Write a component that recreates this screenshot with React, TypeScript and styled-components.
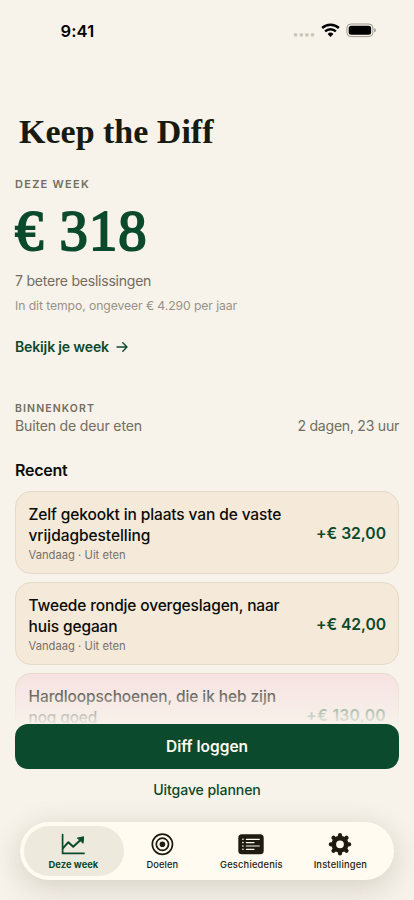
import React from 'react';
import styled, { createGlobalStyle, css } from 'styled-components';

const green = '#0b4a2c';
const paper = '#f7f2ea';

const GlobalStyle = createGlobalStyle`
  * { box-sizing: border-box; }
  body { margin: 0; background: ${paper}; }
`;

const Page = styled.div`
  display: flex;
  flex-direction: column;
  width: 414px;
  height: 900px;
  overflow: hidden;
  background: ${paper};
  color: #0b0c08;
  font-family: Inter, sans-serif;
  white-space: nowrap;
`;

const Viewport = styled.main`
  position: relative;
  flex: 1;
  min-height: 0;
  overflow: hidden;
`;

const Fade = styled.div`
  position: absolute;
  inset: auto 0 0 0;
  height: 52px;
  background: linear-gradient(rgba(247, 242, 234, 0), rgba(247, 242, 234, 0.95));
`;

const StatusBar = styled.header`
  display: flex;
  align-items: center;
  justify-content: space-between;
  height: 61px;
  padding: 0 37px 0 60.5px;
`;

const Clock = styled.span`
  font-size: 16.5px;
  font-weight: 600;
  line-height: 20px;
  letter-spacing: 0.15px;
  color: #000;
`;

const StatusIcons = styled.svg`
  display: block;
  width: 84px;
  height: 16px;
  margin-bottom: 1px;
`;

const Title = styled.h1`
  margin: 51px 0 0 19px;
  font: 700 34px/40px 'Liberation Serif', serif;
  letter-spacing: 0;
  color: #171a10;
`;

const Section = styled.section<{ $top: number }>`
  margin: ${(p) => p.$top}px 15px 0;
`;

const Overline = styled.div<{ $size: number; $spacing: number }>`
  font-size: ${(p) => p.$size}px;
  font-weight: 600;
  line-height: 14px;
  letter-spacing: ${(p) => p.$spacing}px;
  color: #736e60;
`;

const Total = styled.div`
  margin-top: 10px;
  font: 400 56.5px/60px 'Liberation Serif', serif;
  letter-spacing: 1.1px;
  -webkit-text-stroke: 2px currentColor;
  color: ${green};
`;

const Body = styled.div<{ $spacing: number }>`
  font-size: 14.1px;
  line-height: 20px;
  letter-spacing: ${(p) => p.$spacing}px;
  color: #736e60;
`;

const Decisions = styled(Body)`
  margin-top: 10px;
`;

const Pace = styled.div`
  margin-top: 6px;
  font-size: 12.2px;
  line-height: 18px;
  letter-spacing: -0.08px;
  color: #979286;
`;

const WeekLink = styled.a`
  display: flex;
  align-items: center;
  gap: 7px;
  margin-top: 22px;
  font-size: 14.1px;
  font-weight: 600;
  line-height: 20px;
  letter-spacing: -0.18px;
  color: ${green};
`;

const Upcoming = styled.div`
  display: flex;
  justify-content: space-between;
`;

const Heading = styled.h2`
  margin: 0 0 11.4px;
  font-size: 16px;
  font-weight: 600;
  line-height: 20px;
  letter-spacing: -0.25px;
`;

const CardList = styled.div`
  display: flex;
  flex-direction: column;
  gap: 8px;
`;

const Card = styled.article<{ $tone: 'sand' | 'rose' }>`
  display: flex;
  align-items: center;
  justify-content: space-between;
  height: 83px;
  padding: 0 12px 0 12.5px;
  border: 1px solid #e4dac8;
  border-radius: 16px;
  background: ${(p) => (p.$tone === 'sand' ? '#f5e9da' : '#f7e2e1')};
`;

const CardText = styled.div`
  padding-top: 1.4px;
`;

const CardTitle = styled.div`
  font-size: 15.5px;
  font-weight: 500;
  line-height: 21px;
`;

const Line = styled.span<{ $spacing: number }>`
  display: block;
  letter-spacing: ${(p) => p.$spacing}px;
`;

const CardMeta = styled.div`
  margin-top: 0.8px;
  font-size: 11.2px;
  line-height: 16px;
  letter-spacing: 0.02px;
  color: #77716a;
`;

const Amount = styled.div<{ $spacing: number }>`
  padding-top: 1.4px;
  font-size: 15.7px;
  font-weight: 600;
  letter-spacing: ${(p) => p.$spacing}px;
  color: ${green};
`;

const Dock = styled.footer`
  display: flex;
  flex-direction: column;
  height: 176px;
  background: ${paper};
`;

const Primary = styled.button`
  flex: none;
  height: 45px;
  margin: 0 15px;
  padding: 0;
  border: 0;
  border-radius: 13px;
  background: ${green};
  color: #fffbf2;
  font: 600 15.5px/45px Inter, sans-serif;
  letter-spacing: 0;
`;

const Secondary = styled.button`
  flex: none;
  height: 20px;
  margin: 11px 0 0;
  padding: 0;
  border: 0;
  background: none;
  color: ${green};
  font: 500 14.1px/20px Inter, sans-serif;
  letter-spacing: -0.1px;
`;

const TabBar = styled.nav`
  display: flex;
  flex: none;
  height: 58px;
  margin: 22px 20px 0;
  padding: 4px;
  border-radius: 29px;
  background: #fffbf0;
  box-shadow: 0 7px 30px rgba(50, 42, 20, 0.17);
`;

const Tab = styled.div<{ $active?: boolean }>`
  display: flex;
  flex: none;
  flex-direction: column;
  align-items: center;
  width: 100px;
  height: 50px;
  margin-right: -11px;
  padding: 6px 1.2px 0 0;
  border-radius: 25px;
  color: #1e1b10;
  ${(p) =>
    p.$active &&
    css`
      background: #ede9dd;
      color: ${green};
    `}
`;

const TabLabel = styled.span<{ $weight: number; $spacing: number }>`
  margin-top: 3px;
  font-size: 9.3px;
  font-weight: ${(p) => p.$weight};
  line-height: 12px;
  letter-spacing: ${(p) => p.$spacing}px;
`;

const TabIcon = styled.svg`
  display: block;
  width: 28px;
  height: 24px;
`;

const ChartIcon = () => (
  <TabIcon viewBox="0 0 28 24" fill="none" stroke="currentColor" strokeWidth="1.7" strokeLinecap="round" strokeLinejoin="round">
    <path d="M3.6 2.6V21.4H25" />
    <path d="M4 16.2L9.4 10.2L14.2 14.8L21.5 8" strokeWidth="2" />
    <path d="M18.7 6L24.6 4.8L24.1 10.9Z" fill="currentColor" strokeWidth="1" />
  </TabIcon>
);

const TargetIcon = () => (
  <TabIcon viewBox="0 0 28 24" fill="none" stroke="currentColor" strokeWidth="1.7">
    <circle cx="14.4" cy="12.3" r="10.1" />
    <circle cx="14.4" cy="12.3" r="6.1" />
    <circle cx="14.4" cy="12.3" r="2.8" fill="currentColor" stroke="none" />
  </TabIcon>
);

const ListIcon = () => (
  <TabIcon viewBox="0 0 28 24">
    <rect x="1.3" y="2.3" width="25.4" height="20" rx="3.6" fill="currentColor" />
    <g stroke="#fffbf0" strokeWidth="1.2" strokeLinecap="round">
      <path d="M9.3 7.3H22.3M9.3 10.6H17M9.3 14H22.3M9.3 17.3H17" />
      <path d="M5.9 7.3h.1M5.9 10.6h.1M5.9 14h.1M5.9 17.3h.1" strokeWidth="1.6" />
    </g>
  </TabIcon>
);

const GearIcon = () => (
  <TabIcon viewBox="0 -0.3 28 24">
    <g stroke="currentColor" strokeWidth="4.2" strokeLinecap="round">
      <path d="M14 2.8V5M14 19V21.2M4.8 12H7M21 12H23.2M7.5 5.5L9 7M19 17L20.5 18.5M20.5 5.5L19 7M9 17L7.5 18.5" />
    </g>
    <circle cx="14" cy="12" r="6.2" fill="none" stroke="currentColor" strokeWidth="4.6" />
  </TabIcon>
);

const entries = [
  { lines: [['Zelf gekookt in plaats van de vaste', -0.12], ['vrijdagbestelling', -0.06]], amount: '+€ 32,00', spacing: -0.03, tone: 'sand' },
  { lines: [['Tweede rondje overgeslagen, naar', -0.15], ['huis gegaan', -0.12]], amount: '+€ 42,00', spacing: -0.08, tone: 'sand' },
  { lines: [['Hardloopschoenen, die ik heb zijn', -0.1], ['nog goed', -0.18]], amount: '+€ 130,00', spacing: 0.3, tone: 'rose' },
] as const;

const tabs = [
  { label: 'Deze week', Icon: ChartIcon, weight: 700, spacing: 0.08 },
  { label: 'Doelen', Icon: TargetIcon, weight: 500, spacing: 0.08 },
  { label: 'Geschiedenis', Icon: ListIcon, weight: 500, spacing: 0.2 },
  { label: 'Instellingen', Icon: GearIcon, weight: 500, spacing: 0.2 },
];

export default function App() {
  return (
    <Page>
      <GlobalStyle />
      <Viewport>
        <StatusBar>
          <Clock>9:41</Clock>
          <StatusIcons viewBox="0 0 84 16">
            <g fill="#cdc7ba">
              <circle cx="2.6" cy="12.8" r="1.9" />
              <circle cx="8.3" cy="12.8" r="1.9" />
              <circle cx="13.9" cy="12.8" r="1.9" />
              <circle cx="19.5" cy="12.8" r="1.9" />
            </g>
            <g fill="none" stroke="#000" strokeWidth="2.4">
              <path d="M29.1 6A12.4 12.4 0 0 1 45.9 6" />
              <path d="M32.1 9.4A7.8 7.8 0 0 1 42.9 9.4" />
            </g>
            <path d="M37.5 14.9L34.6 12A4.1 4.1 0 0 1 40.4 12Z" fill="#000" />
            <rect x="53.9" y="2" width="26" height="12.6" rx="4" fill="none" stroke="#9c988f" />
            <rect x="55.7" y="3.8" width="22.4" height="9" rx="2.5" fill="#000" />
            <path d="M81.2 6.2C83.4 6.9 83.4 9.7 81.2 10.4Z" fill="#9c988f" />
          </StatusIcons>
        </StatusBar>
        <Title>Keep the Diff</Title>
        <Section $top={25}>
          <Overline $size={11} $spacing={1.28}>DEZE WEEK</Overline>
          <Total>€ 318</Total>
          <Decisions $spacing={-0.26}>7 betere beslissingen</Decisions>
          <Pace>In dit tempo, ongeveer € 4.290 per jaar</Pace>
          <WeekLink>
            Bekijk je week
            <svg width="12" height="12" viewBox="0 0 12 12" fill="none" stroke="currentColor" strokeWidth="1.4" strokeLinecap="round" strokeLinejoin="round">
              <path d="M1 6H11M6.8 1.8L11 6L6.8 10.2" />
            </svg>
          </WeekLink>
        </Section>
        <Section $top={45}>
          <Overline $size={10.5} $spacing={1.11}>BINNENKORT</Overline>
          <Upcoming>
            <Body $spacing={-0.19}>Buiten de deur eten</Body>
            <Body $spacing={-0.27}>2 dagen, 23 uur</Body>
          </Upcoming>
        </Section>
        <Section $top={24}>
          <Heading>Recent</Heading>
          <CardList>
            {entries.map((e) => (
              <Card key={e.amount} $tone={e.tone}>
                <CardText>
                  <CardTitle>
                    {e.lines.map(([text, spacing]) => (
                      <Line key={text} $spacing={spacing}>{text}</Line>
                    ))}
                  </CardTitle>
                  <CardMeta>Vandaag · Uit eten</CardMeta>
                </CardText>
                <Amount $spacing={e.spacing}>{e.amount}</Amount>
              </Card>
            ))}
          </CardList>
        </Section>
        <Fade />
      </Viewport>
      <Dock>
        <Primary>Diff loggen</Primary>
        <Secondary>Uitgave plannen</Secondary>
        <TabBar>
          {tabs.map(({ label, Icon, weight, spacing }, i) => (
            <Tab key={label} $active={i === 0}>
              <Icon />
              <TabLabel $weight={weight} $spacing={spacing}>{label}</TabLabel>
            </Tab>
          ))}
        </TabBar>
      </Dock>
    </Page>
  );
}
